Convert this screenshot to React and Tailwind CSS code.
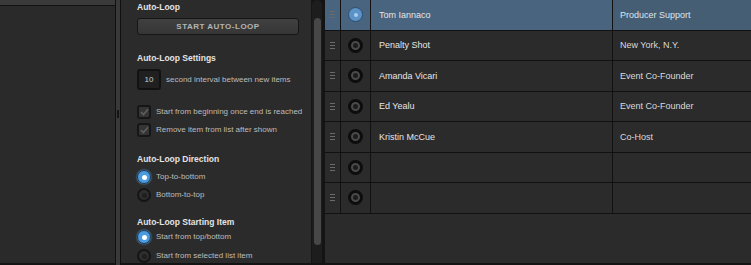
import React from "react";

const font = { fontFamily: '"Liberation Sans", Arial, sans-serif' };

function Check() {
  return (
    <div className="flex h-[14px] w-[14px] items-center justify-center rounded-[3px] border-2 border-[#161616] bg-[#343434]">
      <svg width="9" height="8" viewBox="0 0 9 8">
        <path d="M1 4.2 L3.4 6.5 L8 1.2" fill="none" stroke="#5e5e5e" strokeWidth="1.6" />
      </svg>
    </div>
  );
}

function Radio({ on }) {
  if (on)
    return (
      <div className="flex h-[14px] w-[14px] items-center justify-center rounded-full border border-[#1a3550] bg-[#4a9be0] shadow-[0_0_2px_#6ab4f0]">
        <div className="h-[5px] w-[5px] rounded-full bg-white" />
      </div>
    );
  return (
    <div className="flex h-[14px] w-[14px] items-center justify-center rounded-full border-2 border-[#151515] bg-[#2e2e2e]">
      <div className="h-[5px] w-[5px] rounded-full bg-[#1f1f1f]" />
    </div>
  );
}

function Heading({ children, className = "" }) {
  return (
    <div className={"h-[10px] text-[8.5px] font-bold leading-[12px] text-[#e4e4e4] " + className}>
      {children}
    </div>
  );
}

function Option({ control, label, className = "" }) {
  return (
    <div className={"flex h-[14px] items-center gap-[5px] " + className}>
      {control}
      <span className="text-[8px] leading-[10px] text-[#bcbcbc]">{label}</span>
    </div>
  );
}

function Handle() {
  return (
    <div className="flex flex-col gap-[2px]">
      <div className="h-px w-[5px] bg-[#6a6a6a]" />
      <div className="h-px w-[5px] bg-[#6a6a6a]" />
      <div className="h-px w-[5px] bg-[#6a6a6a]" />
    </div>
  );
}

function TableRadio({ on }) {
  if (on)
    return (
      <div className="flex h-[15px] w-[15px] items-center justify-center rounded-full border border-[#2b4e70] bg-[#5b93c6]">
        <div className="h-[4px] w-[4px] rounded-full bg-[#a8cdee]" />
      </div>
    );
  return (
    <div className="flex h-[15px] w-[15px] items-center justify-center rounded-full border-[3px] border-[#0d0d0d] bg-[#4a4a4a]">
      <div className="h-[5px] w-[5px] rounded-full bg-[#1c1c1c]" />
    </div>
  );
}

const rows = [
  ["Tom Iannaco", "Producer Support"],
  ["Penalty Shot", "New York, N.Y."],
  ["Amanda Vicari", "Event Co-Founder"],
  ["Ed Yealu", "Event Co-Founder"],
  ["Kristin McCue", "Co-Host"],
  ["", ""],
  ["", ""],
];

export default function App() {
  return (
    <div style={font} className="flex h-[265px] w-[751px] overflow-hidden bg-[#141414]">
      {/* left panel */}
      <div className="flex h-[263px] w-[115px] flex-col bg-[#2a2a2a]">
        <div className="h-[6px] border-b border-[#121212] bg-[#3a3a3a]" />
      </div>
      {/* divider */}
      <div className="flex h-[265px] w-[6px] items-center justify-center border-x border-[#101010] bg-[#393939]">
        <div className="mb-[38px] h-[8px] w-[2px] bg-[#141414]" />
      </div>
      {/* settings panel */}
      <div className="flex h-[263px] w-[191px] flex-col border-r border-[#151515] bg-[#2b2b2b] pl-[16px] pt-[1px]">
        <Heading>Auto-Loop</Heading>
        <button className="mt-[7px] flex h-[21px] w-[162px] items-center justify-center rounded-[3px] border border-[#161616] bg-gradient-to-b from-[#404040] to-[#363636] text-[8px] font-bold tracking-[0.5px] text-[#b4b4b4]">
          START AUTO-LOOP
        </button>
        <Heading className="mt-[17px]">Auto-Loop Settings</Heading>
        <div className="mt-[7px] flex h-[21px] items-center gap-[5px]">
          <div className="flex h-[21px] w-[24px] items-center justify-center rounded-[3px] border-2 border-[#121212] bg-[#202020] text-[8px] text-[#cfcfcf]">
            10
          </div>
          <span className="text-[8px] leading-[10px] text-[#bcbcbc]">second interval between new items</span>
        </div>
        <Option className="mt-[15px]" control={<Check />} label="Start from beginning once end is reached" />
        <Option className="mt-[4px]" control={<Check />} label="Remove item from list after shown" />
        <Heading className="mt-[16px]">Auto-Loop Direction</Heading>
        <Option className="mt-[7px]" control={<Radio on />} label="Top-to-bottom" />
        <Option className="mt-[4px]" control={<Radio />} label="Bottom-to-top" />
        <Heading className="mt-[14px]">Auto-Loop Starting Item</Heading>
        <Option className="mt-[4px]" control={<Radio on />} label="Start from top/bottom" />
        <Option className="mt-[5px]" control={<Radio />} label="Start from selected list item" />
      </div>
      {/* scrollbar */}
      <div className="flex h-[263px] w-[10px] flex-col items-center rounded-t-[5px] bg-[#1d1d1d] pt-[18px]">
        <div className="h-[227px] w-[7px] rounded-[4px] bg-[#474747]" />
      </div>
      <div className="w-[3px]" />
      {/* table */}
      <div className="flex h-[263px] flex-1 flex-col bg-[#2b2b2b]">
        {rows.map(([name, role], i) => {
          const sel = i === 0;
          return (
            <div
              key={i}
              className={
                "flex h-[30.5px] border-b border-[#111111] " + (sel ? "bg-[#48647e]" : "bg-[#2b2b2b]")
              }
            >
              <div className="flex w-[16px] items-center justify-center border-r border-[#111111]">
                <Handle />
              </div>
              <div className="flex w-[30px] items-center justify-center border-r border-[#111111]">
                <TableRadio on={sel} />
              </div>
              <div className="flex w-[242px] items-center border-r border-[#111111] pl-[8px] pt-[1px] text-[9px] text-[#e6e6e6]">
                {name}
              </div>
              <div className={"flex flex-1 items-center pl-[7px] pt-[1px] text-[9px] " + (sel ? "bg-[#465e74] text-[#dde6ee]" : "text-[#dadada]")}>
                {role}
              </div>
            </div>
          );
        })}
      </div>
    </div>
  );
}
